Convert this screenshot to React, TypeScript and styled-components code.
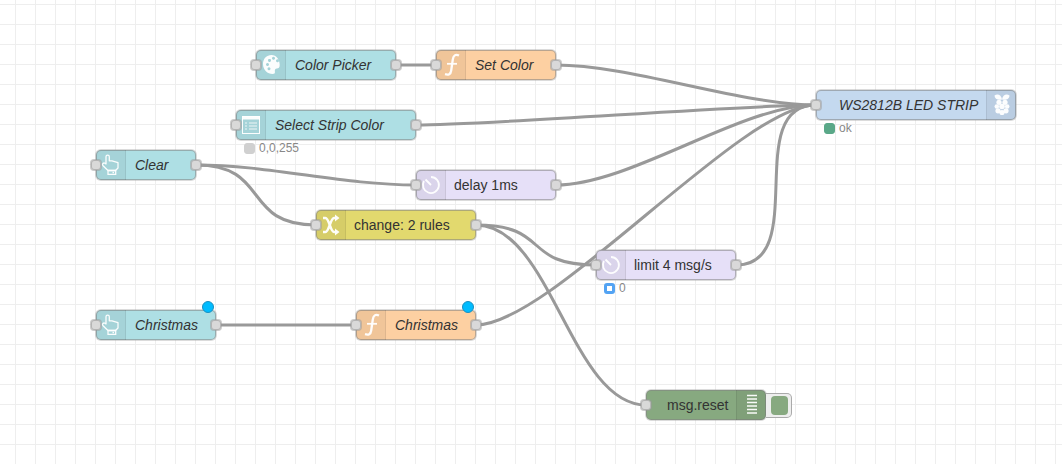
import React from "react";
import styled, { createGlobalStyle } from "styled-components";

const Global = createGlobalStyle`
  html, body { margin: 0; padding: 0; background: #fff; }
`;

const Canvas = styled.div`
  position: relative;
  width: 1062px;
  height: 464px;
  overflow: hidden;
  background-color: #fff;
  background-image:
    linear-gradient(to right, #eee 1px, transparent 1px),
    linear-gradient(to bottom, #eee 1px, transparent 1px);
  background-size: 20px 20px;
  background-position: 15px 4px;
  font-family: "Liberation Sans", Arial, sans-serif;
`;

const WireLayer = styled.svg`
  position: absolute;
  left: 0;
  top: 0;
  width: 1062px;
  height: 464px;
`;

const Wire = styled.path`
  fill: none;
  stroke: #999;
  stroke-width: 3;
`;

const NodeBox = styled.div<{ $x: number; $y: number; $w: number; $bg: string; $right?: boolean }>`
  position: absolute;
  left: ${(p) => p.$x}px;
  top: ${(p) => p.$y}px;
  width: ${(p) => p.$w}px;
  height: 30px;
  box-sizing: border-box;
  display: flex;
  flex-direction: ${(p) => (p.$right ? "row-reverse" : "row")};
  border: 1px solid rgba(130, 130, 130, 0.55);
  border-radius: 5px;
  box-shadow: 0 0 0 1px rgba(153, 153, 153, 0.35);
  background: ${(p) => p.$bg};
`;

const IconBox = styled.div<{ $right?: boolean }>`
  flex: 0 0 30px;
  width: 30px;
  margin: ${(p) => (p.$right ? "-1px -1px -1px 0" : "-1px 0 -1px -1px")};
  box-sizing: border-box;
  background: rgba(0, 0, 0, 0.05);
  border-radius: ${(p) => (p.$right ? "0 5px 5px 0" : "5px 0 0 5px")};
  ${(p) => (p.$right ? "border-left" : "border-right")}: 1px solid rgba(0, 0, 0, 0.08);
  svg { display: block; width: 30px; height: 30px; }
`;

const Label = styled.span<{ $italic?: boolean; $pad: number }>`
  flex: 1;
  padding-left: ${(p) => p.$pad}px;
  font-size: 14px;
  line-height: 28px;
  color: #333;
  white-space: nowrap;
  font-style: ${(p) => (p.$italic ? "italic" : "normal")};
`;

const Port = styled.div<{ $side: "in" | "out" }>`
  position: absolute;
  top: 9px;
  ${(p) => (p.$side === "in" ? "left: -6px" : "right: -6px")};
  width: 10px;
  height: 10px;
  box-sizing: border-box;
  background: #d9d9d9;
  border: 1px solid #b4b4b4;
  border-radius: 3px;
  box-shadow: 0 0 0 1px rgba(153, 153, 153, 0.5);
`;

const ChangedBadge = styled.div`
  position: absolute;
  top: -10px;
  right: 1px;
  width: 12px;
  height: 12px;
  box-sizing: border-box;
  border-radius: 50%;
  background: #00bcff;
  border: 1px solid #1a8fc0;
`;

const Status = styled.div`
  position: absolute;
  left: 7px;
  top: 31px;
  display: flex;
  align-items: center;
  gap: 4px;
  font-size: 12px;
  line-height: 13px;
  color: #888;
`;

const StatusDot = styled.span<{ $bg: string; $ring?: string }>`
  width: 11px;
  height: 11px;
  box-sizing: border-box;
  border-radius: 3px;
  background: ${(p) => p.$bg};
  border: ${(p) => (p.$ring ? `3px solid ${p.$ring}` : `1px solid ${p.$bg}`)};
`;

const DebugToggle = styled.div`
  position: absolute;
  left: 119px;
  top: 2px;
  width: 26px;
  height: 25px;
  box-sizing: border-box;
  padding: 2px 4px 2px 5px;
  background: #eee;
  border: 1px solid #aaa;
  border-left: none;
  border-radius: 0 5px 5px 0;
`;

const DebugButton = styled.div`
  width: 17px;
  height: 100%;
  border-radius: 4px;
  background: #87a980;
`;

const White = { fill: "#fff", fillOpacity: 0.95 };
const Line = { fill: "none", stroke: "#fff", strokeOpacity: 0.95 };

const PaletteIcon = () => (
  <svg viewBox="0 0 30 30">
    <path
      {...White}
      fillRule="evenodd"
      d="M15.500 5C10.500 5 7 8.800 7 14c0 6 4.500 10 9.500 10 2 0 2.600-1 2.400-2.300-.3-1.600.2-3 2-3.100 1.600-.1 2.800-.9 2.800-3.600C23.700 9.500 20.500 5 15.500 5ZM12 10.400a1.500 1.500 0 1 1 0 .01ZM16 8.300a1.500 1.500 0 1 1 0 .01ZM20 10.700a1.500 1.500 0 1 1 0 .01ZM10 14.500a1.500 1.500 0 1 1 0 .01ZM11.500 18.800a1.500 1.500 0 1 1 0 .01Z"
    />
  </svg>
);

const FunctionIcon = () => (
  <svg viewBox="0 0 30 30">
    <path {...Line} strokeWidth={2.300} d="M23 5.500C19.500 3.800 17.300 5.500 16.800 9.500L15.200 20.500C14.700 24.300 12.500 25.300 9 24.200" />
    <path {...Line} strokeWidth={1.800} d="M11 13.800H21" />
  </svg>
);

const FormIcon = () => (
  <svg viewBox="0 0 30 30">
    <rect x="6.500" y="6.500" width="17" height="17" {...Line} strokeWidth={1} />
    <rect x="6" y="6" width="18" height="3.500" {...White} />
    <path {...Line} strokeOpacity={0.8} strokeWidth={1} d="M9 13H11M13 13H21M9 16H11M13 16H21M9 19H11M13 19H21" />
  </svg>
);

const HandIcon = () => (
  <svg viewBox="0 0 30 30">
    <path
      {...Line}
      strokeWidth={1.300}
      strokeLinejoin="round"
      d="M10 6.700C10 4.600 13.300 4.600 13.300 6.700V10.800H16L22 12.700V18L19.500 20.500H12L6.800 15.500C5.800 14 7.500 12.300 9 13.300L10 14Z"
    />
    <path {...Line} strokeWidth={1.300} d="M12 20.500H19.700V24.300H12Z" />
    <rect x="16.500" y="21.800" width="1.500" height="1.500" {...White} />
  </svg>
);

const TimerIcon = () => (
  <svg viewBox="0 0 30 30">
    <path {...Line} strokeWidth={1.800} d="M15 7A8 8 0 1 1 8 11" />
    <path {...Line} strokeWidth={1.800} d="M15 15L9.500 9.500" />
  </svg>
);

const ShuffleIcon = () => (
  <svg viewBox="0 0 30 30">
    <path {...Line} strokeWidth={2.500} d="M7 8H9.500C13 8 14.500 22 18 22H19.500M7 22H9.500C13 22 14.500 8 18 8H19.500" />
    <path {...White} d="M19 4.500L23.500 8L19 11.500ZM19 18.500L23.500 22L19 25.500Z" />
  </svg>
);

const RaspberryIcon = () => (
  <svg viewBox="0 0 30 30">
    <g {...White}>
      <path d="M7.500 5.500C10.500 3 14.500 5 15 9.500C11 10.500 7.500 9 7.500 5.500Z" />
      <path d="M22.500 5.500C19.500 3 15.500 5 15 9.500C19 10.500 22.500 9 22.500 5.500Z" />
      <circle cx="12" cy="12.300" r="2.600" />
      <circle cx="18" cy="12.300" r="2.600" />
      <circle cx="15" cy="16.500" r="2.800" />
      <circle cx="9.800" cy="16.500" r="2.300" />
      <circle cx="20.200" cy="16.500" r="2.300" />
      <circle cx="11" cy="20.800" r="2.600" />
      <circle cx="19" cy="20.800" r="2.600" />
      <circle cx="15" cy="22.500" r="2.600" />
    </g>
  </svg>
);

const DebugIcon = () => (
  <svg viewBox="0 0 30 30">
    <path {...Line} strokeWidth={1.300} d="M10 5.500H20M10 9H20M10 12.500H20M10 16H20M10 19.500H20M10 23H20" />
  </svg>
);

type Pt = [number, number];

function wirePath([x1, y1]: Pt, [x2, y2]: Pt) {
  const dx = x2 - x1;
  const dy = y2 - y1;
  const delta = Math.sqrt(dx * dx + dy * dy);
  const scale = delta < 100 ? 0.75 - 0.75 * ((100 - delta) / 100) : 0.75;
  const c = 100 * scale;
  return `M${x1} ${y1}C${x1 + c} ${y1} ${x2 - c} ${y2} ${x2} ${y2}`;
}

const wires: [Pt, Pt][] = [
  [[396, 65], [436, 65]],
  [[556, 65], [816, 105]],
  [[416, 125], [816, 105]],
  [[556, 185], [816, 105]],
  [[736, 265], [816, 105]],
  [[476, 325], [816, 105]],
  [[196, 165], [416, 185]],
  [[196, 165], [316, 225]],
  [[476, 225], [596, 265]],
  [[476, 225], [646, 405]],
  [[216, 325], [356, 325]],
];

const TEAL = "#aedfe4";
const ORANGE = "#fdd0a2";
const PURPLE = "#e6e0f8";
const YELLOW = "#e2d96e";
const GREEN = "#87a980";
const BLUE = "#c4d9ef";

export default function App() {
  return (
    <Canvas>
      <Global />
      <WireLayer viewBox="0 0 1062 464">
        {wires.map(([a, b], i) => (
          <Wire key={i} d={wirePath(a, b)} />
        ))}
      </WireLayer>

      <NodeBox $x={256} $y={50} $w={140} $bg={TEAL}>
        <IconBox><PaletteIcon /></IconBox>
        <Label $italic $pad={9}>Color Picker</Label>
        <Port $side="in" />
        <Port $side="out" />
      </NodeBox>

      <NodeBox $x={436} $y={50} $w={120} $bg={ORANGE}>
        <IconBox><FunctionIcon /></IconBox>
        <Label $italic $pad={9}>Set Color</Label>
        <Port $side="in" />
        <Port $side="out" />
      </NodeBox>

      <NodeBox $x={236} $y={110} $w={180} $bg={TEAL}>
        <IconBox><FormIcon /></IconBox>
        <Label $italic $pad={9}>Select Strip Color</Label>
        <Port $side="in" />
        <Port $side="out" />
        <Status>
          <StatusDot $bg="#d0d0d0" />
          0,0,255
        </Status>
      </NodeBox>

      <NodeBox $x={816} $y={90} $w={200} $bg={BLUE} $right>
        <IconBox $right><RaspberryIcon /></IconBox>
        <Label $italic $pad={22}>WS2812B LED STRIP</Label>
        <Port $side="in" />
        <Status>
          <StatusDot $bg="#5aa888" />
          ok
        </Status>
      </NodeBox>

      <NodeBox $x={96} $y={150} $w={100} $bg={TEAL}>
        <IconBox><HandIcon /></IconBox>
        <Label $italic $pad={9}>Clear</Label>
        <Port $side="in" />
        <Port $side="out" />
      </NodeBox>

      <NodeBox $x={416} $y={170} $w={140} $bg={PURPLE}>
        <IconBox><TimerIcon /></IconBox>
        <Label $pad={8}>delay 1ms</Label>
        <Port $side="in" />
        <Port $side="out" />
      </NodeBox>

      <NodeBox $x={316} $y={210} $w={160} $bg={YELLOW}>
        <IconBox><ShuffleIcon /></IconBox>
        <Label $pad={8}>change: 2 rules</Label>
        <Port $side="in" />
        <Port $side="out" />
      </NodeBox>

      <NodeBox $x={596} $y={250} $w={140} $bg={PURPLE}>
        <IconBox><TimerIcon /></IconBox>
        <Label $pad={8}>limit 4 msg/s</Label>
        <Port $side="in" />
        <Port $side="out" />
        <Status>
          <StatusDot $bg="#fff" $ring="#53a3f3" />
          0
        </Status>
      </NodeBox>

      <NodeBox $x={96} $y={310} $w={120} $bg={TEAL}>
        <IconBox><HandIcon /></IconBox>
        <Label $italic $pad={9}>Christmas</Label>
        <Port $side="in" />
        <Port $side="out" />
        <ChangedBadge />
      </NodeBox>

      <NodeBox $x={356} $y={310} $w={120} $bg={ORANGE}>
        <IconBox><FunctionIcon /></IconBox>
        <Label $italic $pad={9}>Christmas</Label>
        <Port $side="in" />
        <Port $side="out" />
        <ChangedBadge />
      </NodeBox>

      <NodeBox $x={646} $y={390} $w={120} $bg={GREEN} $right>
        <IconBox $right><DebugIcon /></IconBox>
        <Label $pad={20}>msg.reset</Label>
        <Port $side="in" />
        <DebugToggle>
          <DebugButton />
        </DebugToggle>
      </NodeBox>
    </Canvas>
  );
}
